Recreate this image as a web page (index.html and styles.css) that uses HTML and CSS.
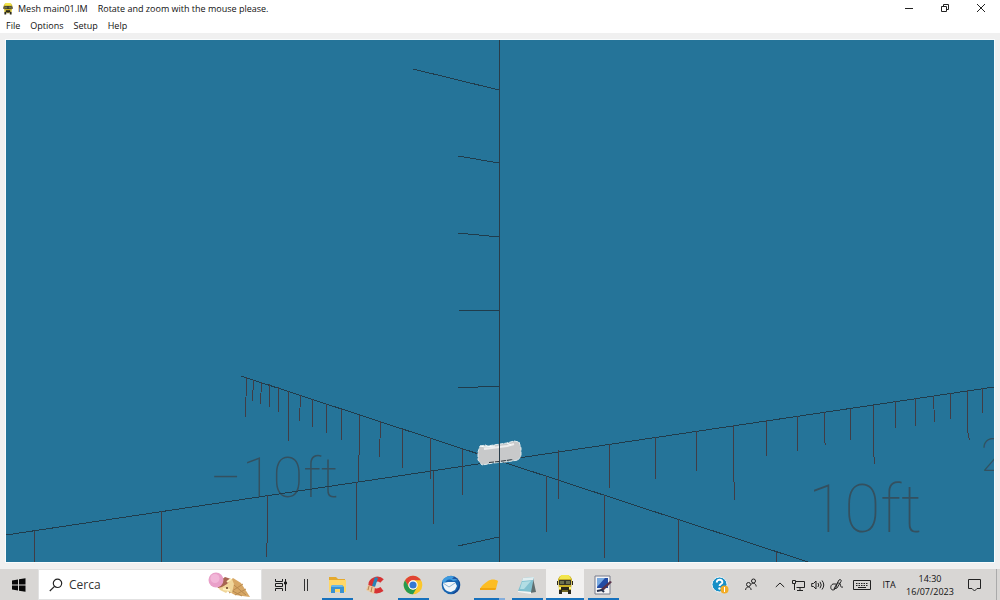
FILE: index.html
```html
<!DOCTYPE html>
<html lang="it">
<head>
<meta charset="utf-8">
<title>Mesh main01.IM</title>
<link rel="stylesheet" href="styles.css">
</head>
<body>
<header class="titlebar">
  <svg class="app-icon" viewBox="0 0 20 20" aria-hidden="true"><use href="#bus"/></svg>
  <h1 class="title">Mesh main01.IM</h1>
  <span class="hint">Rotate and zoom with the mouse please.</span>
  <div class="controls">
    <button class="control" aria-label="Minimize"><svg width="10" height="10" viewBox="0 0 10 10"><path d="M1 5.5h8"/></svg></button>
    <button class="control" aria-label="Restore"><svg width="10" height="10" viewBox="0 0 10 10"><path d="M1.5 3.5h5v5h-5zM3.5 3V1.500h5v5H7"/></svg></button>
    <button class="control" aria-label="Close"><svg width="10" height="10" viewBox="0 0 10 10"><path d="M1 1l8 8M9 1L1 9"/></svg></button>
  </div>
</header>
<nav class="menubar">
  <button class="menu">File</button>
  <button class="menu">Options</button>
  <button class="menu">Setup</button>
  <button class="menu">Help</button>
</nav>
<main class="workspace">
  <svg class="scene" viewBox="6 40 988 522" preserveAspectRatio="xMidYMid slice" role="img" aria-label="Mesh with measuring axes">
    <g class="labels">
      <text class="label-near" x="808" y="532">10ft</text>
      <text class="label-mid" x="981" y="471">2</text>
      <text class="label-far" x="210" y="497">−10ft</text>
    </g>
    <g class="axes">
      <path d="M6 535L478 464L994 387M241 376L506 463L808 562"/>
      <path d="M413 69L499 90M458 156L499 163M458 233L499 237M458 310L499 311M458 388L499 386M458 546L499 537"/>
    </g>
    <g class="ticks">
      <path d="M246.500 377L245.500 417M253.500 380L252.500 401M261.500 382L260.500 404M269.500 384V407M278.500 387V412M288.500 391V441M300.500 395L299.500 421M312.500 399V427M326.500 404V433M341.500 409V440M359.500 415V430L358.500 481M380.500 421L379.500 457M402.500 429V468M430.500 438V479M462.500 449V495"/>
      <path d="M34.500 531V562M161.500 511V562M267.500 495V530L266.500 557M356.500 482V540M433.500 471V524"/>
      <path d="M558.500 450V499M609.500 444V488M655.500 437V479M696.500 431V471M733.500 425V462L734.500 500M766.500 420V456M797.500 416V451M824.500 412V440L825.500 445M850.500 409V440M873.500 405V450L874.500 464M895.500 401V428M915.500 398V426M933.500 396L934.500 422M950.500 393V419M967.500 390V430L969.500 440M982.500 388V413"/>
      <path d="M546.500 476V532M604.500 495V558M678.500 519V562M776.500 552V562"/>
    </g>
    <path d="M480 446l6-1 1 1 20-3 7-2 5 1 2 6v8l-3 4-6 1-7 1-12 1-5 1-6 1-4-5v-8z" fill="#c8c9ca" stroke="#dfebee" stroke-width="1" stroke-dasharray="4 1"/>
    <path d="M484 449l23-3 7-2" fill="none" stroke="#eeeeee" stroke-width="2"/>
    <path d="M480 446l5 1 10-1M507 443l4 2" fill="none" stroke="#f8ffff"/>
    <path d="M489 462.500l10-1 14-2" fill="none" stroke="#28333a" stroke-dasharray="5 1"/>
    <path class="upright" d="M499.500 40V562"/>
  </svg>
</main>
<footer class="taskbar">
  <button class="start" aria-label="Start"><svg width="14" height="14" viewBox="0 0 14 14"><path d="M0 2.500l6-1v5H0zM7 1.300L13.500.3v6.200H7zM0 7.500h6v5l-6-1zM7 7.500h6.500v6.200L7 12.700z" fill="#080808"/></svg></button>
  <div class="search">
    <svg width="14" height="14" viewBox="0 0 14 14" aria-hidden="true"><g fill="none" stroke="#222" stroke-width="1.200"><circle cx="8.500" cy="5.300" r="4.200"/><path d="M5.500 8.300L.8 13"/></g></svg>
    <input class="search-box" type="search" placeholder="Cerca" aria-label="Cerca">
    <svg width="44" height="28" viewBox="0 0 44 28" aria-hidden="true">
      <path d="M15 17L26 7l8 5 9 14-15-2z" fill="#d7a765"/>
      <path d="M22 22l14-9M28 24l11-6M22 10l17 14M18 16l17 9" stroke="#b98a4e" fill="none"/>
      <path d="M9 14l9-6 7 0 2 5-2 9-4-2-2 2-6-3z" fill="#f0d69a"/>
      <path d="M9 13l9-7 6 2-4 5-5 3-4 1z" fill="#a76550"/>
      <path d="M20 11l4-3M16 18l7 1" stroke="#fff0bd" stroke-width="2"/>
      <circle cx="9" cy="9" r="7.500" fill="#e9a0c9"/><circle cx="8" cy="7.500" r="4.500" fill="#f2b6d8"/><circle cx="20" cy="17" r="1" fill="#673e29"/>
    </svg>
  </div>
  <button class="app" aria-label="Task view"><svg width="14" height="14" viewBox="0 0 14 14" fill="none" stroke="#1c1c1c"><path d="M1.500 1v2.500h7V1M1.500 13v-2.500h7V13M1.500 5.500h7v3h-7zM11.500 1v12"/><path d="M10.500 4h2v2h-2z" fill="#1c1c1c"/></svg></button>
  <div class="divider"><svg width="6" height="12" viewBox="0 0 6 12"><path d="M1.500 0v12M4.500 0v12" stroke="#333"/></svg></div>
  <button class="app running" aria-label="File Explorer"><svg width="20" height="20" viewBox="0 0 20 20"><path d="M2 2h7l2 2h7v12H2z" fill="#e5a92d"/><path d="M2 5h17v12H2z" fill="#ffd768"/><path d="M5 10h10l2 2v6h-4v-4H8v4H4v-6z" fill="#3a91d1"/><path d="M5 10h10l1 2H4z" fill="#69b7e9"/></svg></button>
  <button class="app" aria-label="CCleaner"><svg width="20" height="20" viewBox="0 0 20 20"><path d="M17 6c-4-4-12-1-11 5 1 6 7 6 11 3" fill="none" stroke="#d63233" stroke-width="5"/><path d="M10 2l3 1-3 9-3-1z" fill="#2684b7"/><path d="M3 10l7 2-1 7-8-4z" fill="#ecc99d"/><path d="M4 11l-1 4M7 12l-1 5" stroke="#b68252"/></svg></button>
  <button class="app running" aria-label="Chrome"><svg width="20" height="20" viewBox="0 0 20 20"><circle cx="10" cy="10" r="9.300" fill="#fbc72b"/><path d="M2 5.300A9.300 9.300 0 0 1 18 5.300H10A4.700 4.700 0 0 0 5.900 12.300z" fill="#e04435"/><path d="M2 5.300A9.300 9.300 0 0 0 10 19.300l4.100-7A4.700 4.700 0 0 1 5.900 12.300z" fill="#269b50"/><circle cx="10" cy="10" r="4.700" fill="#fff"/><circle cx="10" cy="10" r="3.600" fill="#3578d2"/></svg></button>
  <button class="app" aria-label="Thunderbird"><svg width="20" height="20" viewBox="0 0 20 20"><circle cx="10" cy="10" r="9.300" fill="#1764b0"/><path d="M1 6c4-7 13-6 16-1l-5 1c-4-3-7-1-9 3z" fill="#3f9bdf"/><path d="M2 8l5-1 7 0 2 4-2 4-4 2c-5 0-8-4-8-9z" fill="#eff5fa"/><path d="M2 8l6 4 6-4" fill="none" stroke="#8db5d5"/><path d="M11 4c7-2 9 5 5 11l-5 4c9-1 11-14 2-17z" fill="#16428e"/></svg></button>
  <button class="app running split" aria-label="Note"><svg width="20" height="20" viewBox="0 0 20 20"><path d="M1 14c1-3 4-5 8-8 3-2 7-2 10 0l-2 8z" fill="#fcbd24"/><path d="M1 13h16l-.5 2H1z" fill="#f1a50f"/></svg></button>
  <button class="app running" aria-label="Notepad"><svg width="20" height="20" viewBox="0 0 20 20"><path d="M16 3l3 14-6 1z" fill="#606e70"/><path d="M6 3l11-1-3 15-13-1z" fill="#82c1d0"/><path d="M6 3l11-1-1 3-11 1z" fill="#e2eef0"/><path d="M5 7l9-1-7 8H3z" fill="#b2dde4"/><path d="M1 16l13 1v2L1 17z" fill="#f5f5f5"/></svg></button>
  <button class="app running active" aria-label="Mesh viewer"><svg width="20" height="20" viewBox="0 0 20 20"><g id="bus"><path d="M5 1h10l2 3-1 11H4L3 4z" fill="#c8ae22"/><path d="M6 0h8l2 4H4z" fill="#f3e64d"/><path d="M4 5h12v5H4z" fill="#34352a"/><path d="M5 6h4v3H5zM11 6h4v3h-4z" fill="#6d714f"/><path d="M2 6h1v4H2zM17 6h1v4h-1zM4 15h3v4H4zM13 15h3v4h-3zM6 12h8v3H6z" fill="#29271a"/><path d="M7 15h6v2H7z" fill="#746a23"/><path d="M4 12h2v2H4zM14 12h2v2h-2z" fill="#fff67c"/></g></svg></button>
  <button class="app running" aria-label="Image editor"><svg width="20" height="20" viewBox="0 0 20 20"><path d="M2 1h15v18H2z" fill="#f4f4f6" stroke="#777b8a"/><path d="M4 3h11v10H4z" fill="#234ba4"/><path d="M4 3h8l-8 9z" fill="#78a9e0"/><path d="M19 7l-8 8-5 1 3-3 8-7z" fill="#593249"/><path d="M4 16l5-1 2 2" fill="none" stroke="#25304c" stroke-width="2"/></svg></button>
  <div class="tray">
    <button class="tray-item wide" aria-label="Help"><svg width="18" height="18" viewBox="0 0 18 18"><circle cx="8.500" cy="8.500" r="7.500" fill="#178fc6" stroke="#f4f7f8"/><path d="M5.800 6.500c0-4 6-3.500 5.500 0-.3 1.600-2.700 1.600-2.700 3.500" fill="none" stroke="#fff" stroke-width="2"/><circle cx="8.500" cy="12.500" r="1.200" fill="#fff"/><circle cx="13.500" cy="13.500" r="4" fill="#f3ad26"/><path d="M13.500 11v5" stroke="#fff"/></svg></button>
    <button class="tray-item wide people" aria-label="People"><svg class="line" width="12" height="14" viewBox="0 0 12 14"><circle cx="3.500" cy="6.500" r="2"/><circle cx="8.500" cy="3" r="2"/><path d="M.6 12c0-4 5.500-4 5.500 0M6 6.500c2-2.500 5-1 5.200 2"/></svg></button>
    <button class="tray-item" aria-label="Show hidden icons"><svg class="line" width="10" height="8" viewBox="0 0 10 8"><path d="M.8 6L5 2l4.200 4"/></svg></button>
    <button class="tray-item" aria-label="Network"><svg class="line" width="14" height="12" viewBox="0 0 14 12"><path d="M4 2.500h8.500v6H4.500M8 9v2M5 11.500h6M.5 1.500h3v3h-3zM2.500 5v6"/></svg></button>
    <button class="tray-item" aria-label="Volume"><svg class="line" width="14" height="12" viewBox="0 0 14 12"><path d="M.7 4.500H2.500L5 2v8L2.500 7.500H.7zM7 4q1.500 2 0 4M9 2.800q2.500 3.200 0 6.400M11 1.500q3.500 4.500 0 9"/></svg></button>
    <button class="tray-item" aria-label="Pen"><svg class="line" width="14" height="14" viewBox="0 0 14 14"><path d="M5 9l4-7c1-1 3 0 2 1.500L7 10l-3 1zM6 6H3c-3 1-3 6 0 6 4 0 3-8 6-7 3 1 0 5 4 4"/></svg></button>
    <button class="tray-item wide" aria-label="Keyboard"><svg class="line" width="18" height="12" viewBox="0 0 18 12"><path d="M.5 1.500h17v9H.500z"/><path d="M3 4.500h12M3 6.500h12" stroke-dasharray="1.500 1"/><path d="M5 8.500h8"/></svg></button>
    <button class="tray-item language">ITA</button>
    <button class="tray-item clock"><time datetime="2023-07-16T14:30"><span>14:30</span><span>16/07/2023</span></time></button>
    <button class="tray-item wide" aria-label="Notifications"><svg class="line" width="14" height="14" viewBox="0 0 14 14"><path d="M.5 1.500h12v9H9l-2.500 2.500L4 10.500H.5z"/></svg></button>
    <button class="desktop" aria-label="Show desktop"></button>
  </div>
</footer>
</body>
</html>
```

FILE: styles.css
```css
* {
  box-sizing: border-box;
}

body {
  display: flex;
  flex-direction: column;
  min-height: 100vh;
  margin: 0;
  overflow: hidden;
  background: #f0f0f0;
  color: #111;
  font: 9px/14px "Open Sans", "Noto Sans", sans-serif;
}

button {
  display: flex;
  align-items: center;
  justify-content: center;
  margin: 0;
  padding: 0;
  border: 0;
  background: none;
  color: inherit;
  font: inherit;
}

.titlebar {
  display: flex;
  align-items: center;
  height: 18px;
  padding: 0 1px 0 2px;
  background: #fff;
}

.app-icon {
  width: 12px;
  height: 12px;
  margin-right: 4px;
}

.title {
  margin: 0 10px 0 0;
  font: inherit;
}

.controls {
  display: flex;
  align-self: stretch;
  margin-left: auto;
}

.control {
  width: 36px;
  padding-bottom: 2px;
}

.control path {
  fill: none;
  stroke: #222;
}

.menubar {
  display: flex;
  gap: 10px;
  height: 15px;
  padding: 0 6px;
  background: #fff;
}

.workspace {
  display: flex;
  flex: 1;
  min-height: 0;
  padding: 7px 6px;
}

.scene {
  flex: 1;
  width: 100%;
  min-width: 0;
  height: auto;
  background: #257499;
  box-shadow: 0 0 0 1px #f9fcfd;
}

.axes,
.ticks,
.upright {
  fill: none;
  stroke-width: 1;
  shape-rendering: crispEdges;
}

.axes {
  stroke: #203c4c;
}

.ticks {
  stroke: #403d46;
}

.upright {
  stroke: #293c49;
}

.labels {
  fill: #34505f;
  font-family: Roboto, Lato, sans-serif;
  font-weight: 100;
}

.label-near {
  font-size: 66px;
}

.label-mid {
  font-size: 46px;
}

.label-far {
  font-size: 56px;
}

.taskbar {
  display: flex;
  height: 31px;
  background: #d8d6d4;
}

.start {
  width: 38px;
}

.search {
  display: flex;
  align-items: center;
  width: 224px;
  padding: 0 10px;
  border: 1px solid #e2e2e2;
  background: #fff;
}

.search-box {
  flex: 1;
  min-width: 0;
  margin: 0;
  padding: 0 6px;
  border: 0;
  outline: 0;
  background: none;
  font: 12px/16px "Open Sans", "Noto Sans", sans-serif;
}

.search-box::placeholder {
  color: #333;
  opacity: 1;
}

.app {
  width: 38px;
  border-top: 2px solid transparent;
  border-bottom: 2px solid transparent;
}

.running {
  background: linear-gradient(#1671bd, #1671bd) bottom / 31px 2px no-repeat border-box;
}

.split {
  background-image: linear-gradient(90deg, #1671bd 80%, #84addb 80%);
}

.active {
  background-color: #f2f1f0;
  background-size: 100% 2px;
}

.divider {
  display: flex;
  align-items: center;
  justify-content: center;
  width: 12px;
  margin-right: 6px;
}

.tray {
  display: flex;
  margin-left: auto;
}

.tray-item {
  width: 19px;
}

.wide {
  width: 31px;
}

.people {
  margin-right: 4px;
}

.line {
  fill: none;
  stroke: #222;
}

.language {
  width: 24px;
}

.clock {
  width: 58px;
  line-height: 13px;
}

.clock span {
  display: block;
}

.desktop {
  width: 4px;
  margin-left: 6px;
  border-left: 1px solid #aaa;
}
```
